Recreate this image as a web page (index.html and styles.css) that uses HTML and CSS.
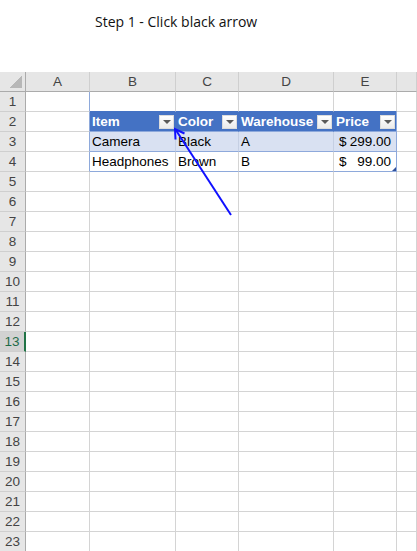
FILE: index.html
```html
<!DOCTYPE html>
<html lang="en">
<head>
  <meta charset="UTF-8">
  <meta name="viewport" content="width=device-width, initial-scale=1">
  <title>Step 1 - Click black arrow</title>
  <link rel="stylesheet" href="styles.css">
</head>
<body>
  <div class="caption">Step 1 - Click black arrow</div>

  <div class="sheet">
    <div class="row head">
      <div class="corner"></div><div>A</div><div>B</div><div>C</div><div>D</div><div>E</div><div></div>
    </div>
    <div class="row">
      <div class="num">1</div><div class="edge"></div><div class="top"></div><div class="top"></div><div class="top"></div><div class="top"></div><div></div>
    </div>
    <div class="row">
      <div class="num">2</div><div class="edge"></div>
      <div class="th">Item<span class="dd"></span></div>
      <div class="th">Color<span class="dd"></span></div>
      <div class="th">Warehouse<span class="dd"></span></div>
      <div class="th last">Price<span class="dd"></span></div>
      <div></div>
    </div>
    <div class="row">
      <div class="num">3</div><div class="edge"></div>
      <div class="td band">Camera</div>
      <div class="td band">Black</div>
      <div class="td band">A</div>
      <div class="td band last money"><span>$</span><span>299.00</span></div>
      <div></div>
    </div>
    <div class="row">
      <div class="num">4</div><div class="edge"></div>
      <div class="td bottom">Headphones</div>
      <div class="td bottom">Brown</div>
      <div class="td bottom">B</div>
      <div class="td bottom last money handle"><span>$</span><span>99.00</span></div>
      <div></div>
    </div>
    <div class="row"><div class="num">5</div><div></div><div></div><div></div><div></div><div></div><div></div></div>
    <div class="row"><div class="num">6</div><div></div><div></div><div></div><div></div><div></div><div></div></div>
    <div class="row"><div class="num">7</div><div></div><div></div><div></div><div></div><div></div><div></div></div>
    <div class="row"><div class="num">8</div><div></div><div></div><div></div><div></div><div></div><div></div></div>
    <div class="row"><div class="num">9</div><div></div><div></div><div></div><div></div><div></div><div></div></div>
    <div class="row"><div class="num">10</div><div></div><div></div><div></div><div></div><div></div><div></div></div>
    <div class="row"><div class="num">11</div><div></div><div></div><div></div><div></div><div></div><div></div></div>
    <div class="row"><div class="num">12</div><div></div><div></div><div></div><div></div><div></div><div></div></div>
    <div class="row"><div class="num active">13</div><div></div><div></div><div></div><div></div><div></div><div></div></div>
    <div class="row"><div class="num">14</div><div></div><div></div><div></div><div></div><div></div><div></div></div>
    <div class="row"><div class="num">15</div><div></div><div></div><div></div><div></div><div></div><div></div></div>
    <div class="row"><div class="num">16</div><div></div><div></div><div></div><div></div><div></div><div></div></div>
    <div class="row"><div class="num">17</div><div></div><div></div><div></div><div></div><div></div><div></div></div>
    <div class="row"><div class="num">18</div><div></div><div></div><div></div><div></div><div></div><div></div></div>
    <div class="row"><div class="num">19</div><div></div><div></div><div></div><div></div><div></div><div></div></div>
    <div class="row"><div class="num">20</div><div></div><div></div><div></div><div></div><div></div><div></div></div>
    <div class="row"><div class="num">21</div><div></div><div></div><div></div><div></div><div></div><div></div></div>
    <div class="row"><div class="num">22</div><div></div><div></div><div></div><div></div><div></div><div></div></div>
    <div class="row"><div class="num">23</div><div></div><div></div><div></div><div></div><div></div><div></div></div>
  </div>

  <!-- hint arrow drawn over the sheet -->
  <svg class="pointer" width="417" height="551" viewBox="0 0 417 551">
    <line x1="231" y1="215" x2="175.5" y2="129.5" stroke="#1010ff" stroke-width="2"/>
    <polyline points="184.5,133.5 175,129 175.5,139.5" fill="none" stroke="#1010ff" stroke-width="2"/>
  </svg>
</body>
</html>
```

FILE: styles.css
```css
body {
  margin: 0;
  background: white;
  position: relative;
  overflow: hidden;
}

.caption {
  height: 72px;
  box-sizing: border-box;
  padding: 12px 0 0 95px;
  font-family: "Open Sans", sans-serif;
  font-size: 14px;
  color: #111;
}

.sheet {
  font-family: "Liberation Sans", Arial, sans-serif;
  font-size: 13.5px;
  color: #000;
}

.row {
  display: grid;
  grid-template-columns: 26px 64px 86px 63px 95px 63px 1fr;
  height: 20px;
}

.row > div {
  box-sizing: border-box;
  border-right: 1px solid #d4d4d4;
  border-bottom: 1px solid #d4d4d4;
  line-height: 20px;
  padding: 0 2px;
  white-space: nowrap;
  overflow: hidden;
}

.head > div {
  background: #e6e6e6;
  border-bottom-color: #ababab;
  border-right-color: #cfcfcf;
  text-align: center;
  color: #444;
}

.head .corner {
  border-right-color: #ababab;
  background: linear-gradient(135deg, transparent 50%, #b7b7b7 50%) no-repeat;
  background-color: #e6e6e6;
  background-size: 12px 12px;
  background-position: right 3px bottom 3px;
}

.row .num {
  background: #e6e6e6;
  border-right-color: #ababab;
  border-bottom-color: #cfcfcf;
  text-align: center;
  color: #444;
  padding: 0;
}

.row .num.active {
  background: #d2d2d2;
  border-right: 2px solid #217346;
  color: #1e6b48;
}

/* table range B2:E4 */
.row .edge {
  border-right-color: #8ea9db;
}

.row .top {
  border-bottom-color: #4472c4;
}

.row .th {
  background: #4472c4;
  color: white;
  font-weight: bold;
  border-right-color: #4472c4;
  border-bottom-color: #8ea9db;
  display: flex;
  align-items: center;
  justify-content: space-between;
  padding: 0 1px 0 2px;
}

.dd {
  flex: none;
  width: 15px;
  height: 14px;
  box-sizing: border-box;
  border: 1px solid #dcdcdc;
  background: linear-gradient(#ffffff, #ebebeb);
  display: flex;
  align-items: center;
  justify-content: center;
}

.dd::after {
  content: "";
  border-left: 4px solid transparent;
  border-right: 4px solid transparent;
  border-top: 4px solid #5a5a5a;
}

.row .band {
  background: #d9e1f2;
  border-right-color: #c5cfe3;
  border-bottom-color: #8ea9db;
}

.row .bottom {
  border-bottom-color: #8ea9db;
}

.row .last {
  border-right-color: #8ea9db;
}

.row .money {
  display: flex;
  justify-content: space-between;
  padding: 0 5px 0 5px;
}

.handle {
  position: relative;
}

.handle::after {
  content: "";
  position: absolute;
  right: 0;
  bottom: 0;
  border-left: 4px solid transparent;
  border-bottom: 4px solid #2f4f9a;
}

.pointer {
  position: absolute;
  left: 0;
  top: 0;
  pointer-events: none;
}
```
